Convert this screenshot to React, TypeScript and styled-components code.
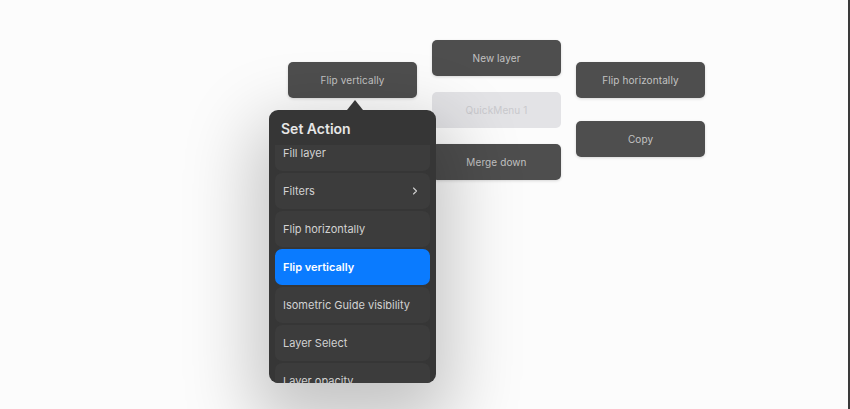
import React from "react";
import styled, { createGlobalStyle } from "styled-components";
import { ChevronRight } from "lucide-react";

const Global = createGlobalStyle`
  html, body { margin: 0; padding: 0; background: #fcfcfc; }
  body { font-family: "Inter", "Liberation Sans", sans-serif; -webkit-font-smoothing: antialiased; }
  * { box-sizing: border-box; }
`;

const Canvas = styled.div`
  position: relative;
  width: 850px;
  height: 409px;
  overflow: hidden;
  background: #fcfcfc;
  border-right: 2px solid #3a3a3a;
  display: flex;
  align-items: flex-start;
  gap: 15px;
  padding-left: 288px;
`;

const Column = styled.div<{ $top: number; $gap: number }>`
  position: relative;
  display: flex;
  flex-direction: column;
  gap: ${(p) => p.$gap}px;
  padding-top: ${(p) => p.$top}px;
`;

const Tile = styled.div<{ $disabled?: boolean }>`
  width: 129px;
  height: 36px;
  border-radius: 5px;
  display: flex;
  align-items: center;
  justify-content: center;
  font-size: 10px;
  font-weight: 400;
  letter-spacing: 0.1px;
  background: ${(p) => (p.$disabled ? "#e3e3e6" : "#4e4e4e")};
  color: ${(p) => (p.$disabled ? "#c9c9cd" : "#c2c2c2")};
  box-shadow: ${(p) => (p.$disabled ? "none" : "0 1px 3px rgba(0,0,0,0.15)")};
`;

const Popover = styled.div`
  position: absolute;
  left: -19px;
  top: 110px;
  width: 167px;
  height: 273px;
  background: #363636;
  border-radius: 9px;
  box-shadow: 0 28px 70px 16px rgba(0, 0, 0, 0.22);
  display: flex;
  flex-direction: column;
  z-index: 2;
`;

const Arrow = styled.div`
  position: absolute;
  top: -10px;
  left: 78px;
  width: 0;
  height: 0;
  border-left: 8px solid transparent;
  border-right: 8px solid transparent;
  border-bottom: 10px solid #363636;
`;

const Header = styled.div`
  height: 35px;
  flex: none;
  display: flex;
  align-items: center;
  padding: 1px 0 0 12px;
  font-size: 14px;
  font-weight: 600;
  color: #e6e6e6;
`;

const List = styled.div`
  flex: 1;
  overflow: hidden;
  padding: 0 6px;
  border-radius: 0 0 9px 9px;
`;

const ListInner = styled.div`
  display: flex;
  flex-direction: column;
  gap: 2px;
  margin-top: -10px;
`;

const Row = styled.div<{ $active?: boolean }>`
  height: 36px;
  border-radius: 7px;
  display: flex;
  align-items: center;
  justify-content: space-between;
  padding: 0 8px 0 8px;
  font-size: 11px;
  font-weight: ${(p) => (p.$active ? 600 : 400)};
  color: ${(p) => (p.$active ? "#ffffff" : "#d2d2d2")};
  background: ${(p) => (p.$active ? "#0a7bff" : "#3c3c3c")};
`;

const Chevron = styled(ChevronRight)`
  color: #d0d0d0;
  margin-right: 1px;
`;

const items: { label: string; sub?: boolean; active?: boolean }[] = [
  { label: "Fill layer" },
  { label: "Filters", sub: true },
  { label: "Flip horizontally" },
  { label: "Flip vertically", active: true },
  { label: "Isometric Guide visibility" },
  { label: "Layer Select" },
  { label: "Layer opacity" },
];

export default function App() {
  return (
    <>
      <Global />
      <Canvas>
        <Column $top={62} $gap={0}>
          <Tile>Flip vertically</Tile>
          <Popover>
            <Arrow />
            <Header>Set Action</Header>
            <List>
              <ListInner>
                {items.map((it) => (
                  <Row key={it.label} $active={it.active}>
                    <span>{it.label}</span>
                    {it.sub && <Chevron size={12} strokeWidth={2.2} />}
                  </Row>
                ))}
              </ListInner>
            </List>
          </Popover>
        </Column>
        <Column $top={40} $gap={16}>
          <Tile>New layer</Tile>
          <Tile $disabled>QuickMenu 1</Tile>
          <Tile>Merge down</Tile>
        </Column>
        <Column $top={62} $gap={23}>
          <Tile>Flip horizontally</Tile>
          <Tile>Copy</Tile>
        </Column>
      </Canvas>
    </>
  );
}
